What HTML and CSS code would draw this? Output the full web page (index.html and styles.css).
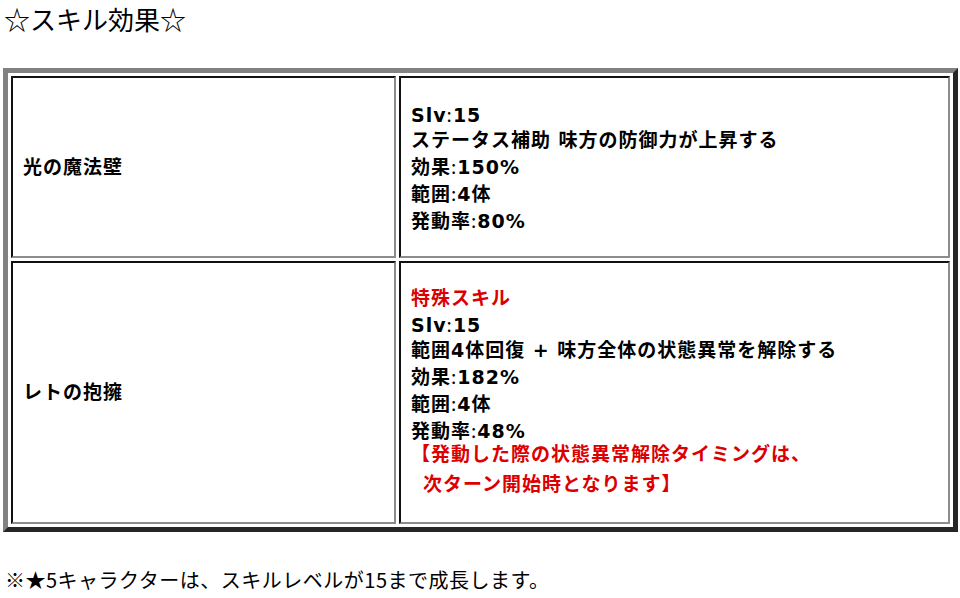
FILE: index.html
```html
<!DOCTYPE html>
<html lang="ja">
<head>
<meta charset="utf-8">
<title>スキル効果</title>
<link rel="stylesheet" href="styles.css">
</head>
<body>
<div class="page">
  <h2 class="title">☆スキル効果☆</h2>
  <div class="skills">
    <div class="cell name">光の魔法壁</div>
    <div class="cell desc">
      <div>Slv<span class="c">:</span>15</div>
      <div>ステータス補助 味方の防御力が上昇する</div>
      <div>効果<span class="c">:</span>150%</div>
      <div>範囲<span class="c">:</span>4体</div>
      <div>発動率<span class="c">:</span>80%</div>
    </div>
    <div class="cell name">レトの抱擁</div>
    <div class="cell desc">
      <div class="red">特殊スキル</div>
      <div>Slv<span class="c">:</span>15</div>
      <div>範囲4体回復 + 味方全体の状態異常を解除する</div>
      <div>効果<span class="c">:</span>182%</div>
      <div>範囲<span class="c">:</span>4体</div>
      <div>発動率<span class="c">:</span>48%</div>
      <div class="note red">
        <div>【発動した際の状態異常解除タイミングは、</div>
        <div class="indent">次ターン開始時となります】</div>
      </div>
    </div>
  </div>
  <p class="foot">※★5キャラクターは、スキルレベルが15まで成長します。</p>
</div>
</body>
</html>
```
FILE: styles.css
```css
html, body {
  margin: 0;
  padding: 0;
  background: #fff;
}
body {
  color: #000;
  font-family: "Noto Sans CJK JP", "Noto Sans", sans-serif;
}
.page {
  padding: 0 2px 0 3px;
}
.title {
  margin: 4px 0 34px 1px;
  font-size: 26px;
  line-height: 30px;
  font-weight: 400;
  letter-spacing: 0;
}
.skills {
  display: grid;
  grid-template-columns: 385px 551px;
  grid-template-rows: 182px 263px;
  column-gap: 3px;
  row-gap: 3px;
  padding: 3px;
  border: 5px solid;
  border-color: #828282 #262626 #262626 #828282;
  width: 939px;
}
.cell {
  border: 2px solid;
  border-color: #111 #8c8c8c #8c8c8c #111;
  padding: 0 10px;
  display: flex;
  flex-direction: column;
  justify-content: center;
  font-family: "DejaVu Sans", "Noto Sans CJK JP", sans-serif;
  font-weight: 700;
  font-size: 19px;
  line-height: 25px;
  letter-spacing: 1px;
  white-space: nowrap;
}
.c {
  font-family: "Noto Sans CJK JP", sans-serif;
  font-weight: 400;
}
.red {
  color: #dc0000;
}
.note {
  margin-top: -5px;
  line-height: 30px;
}
.indent {
  padding-left: 12px;
}
.foot {
  margin: 36px 0 0 2px;
  font-size: 20px;
  line-height: 24px;
  letter-spacing: 0.5px;
}
```
